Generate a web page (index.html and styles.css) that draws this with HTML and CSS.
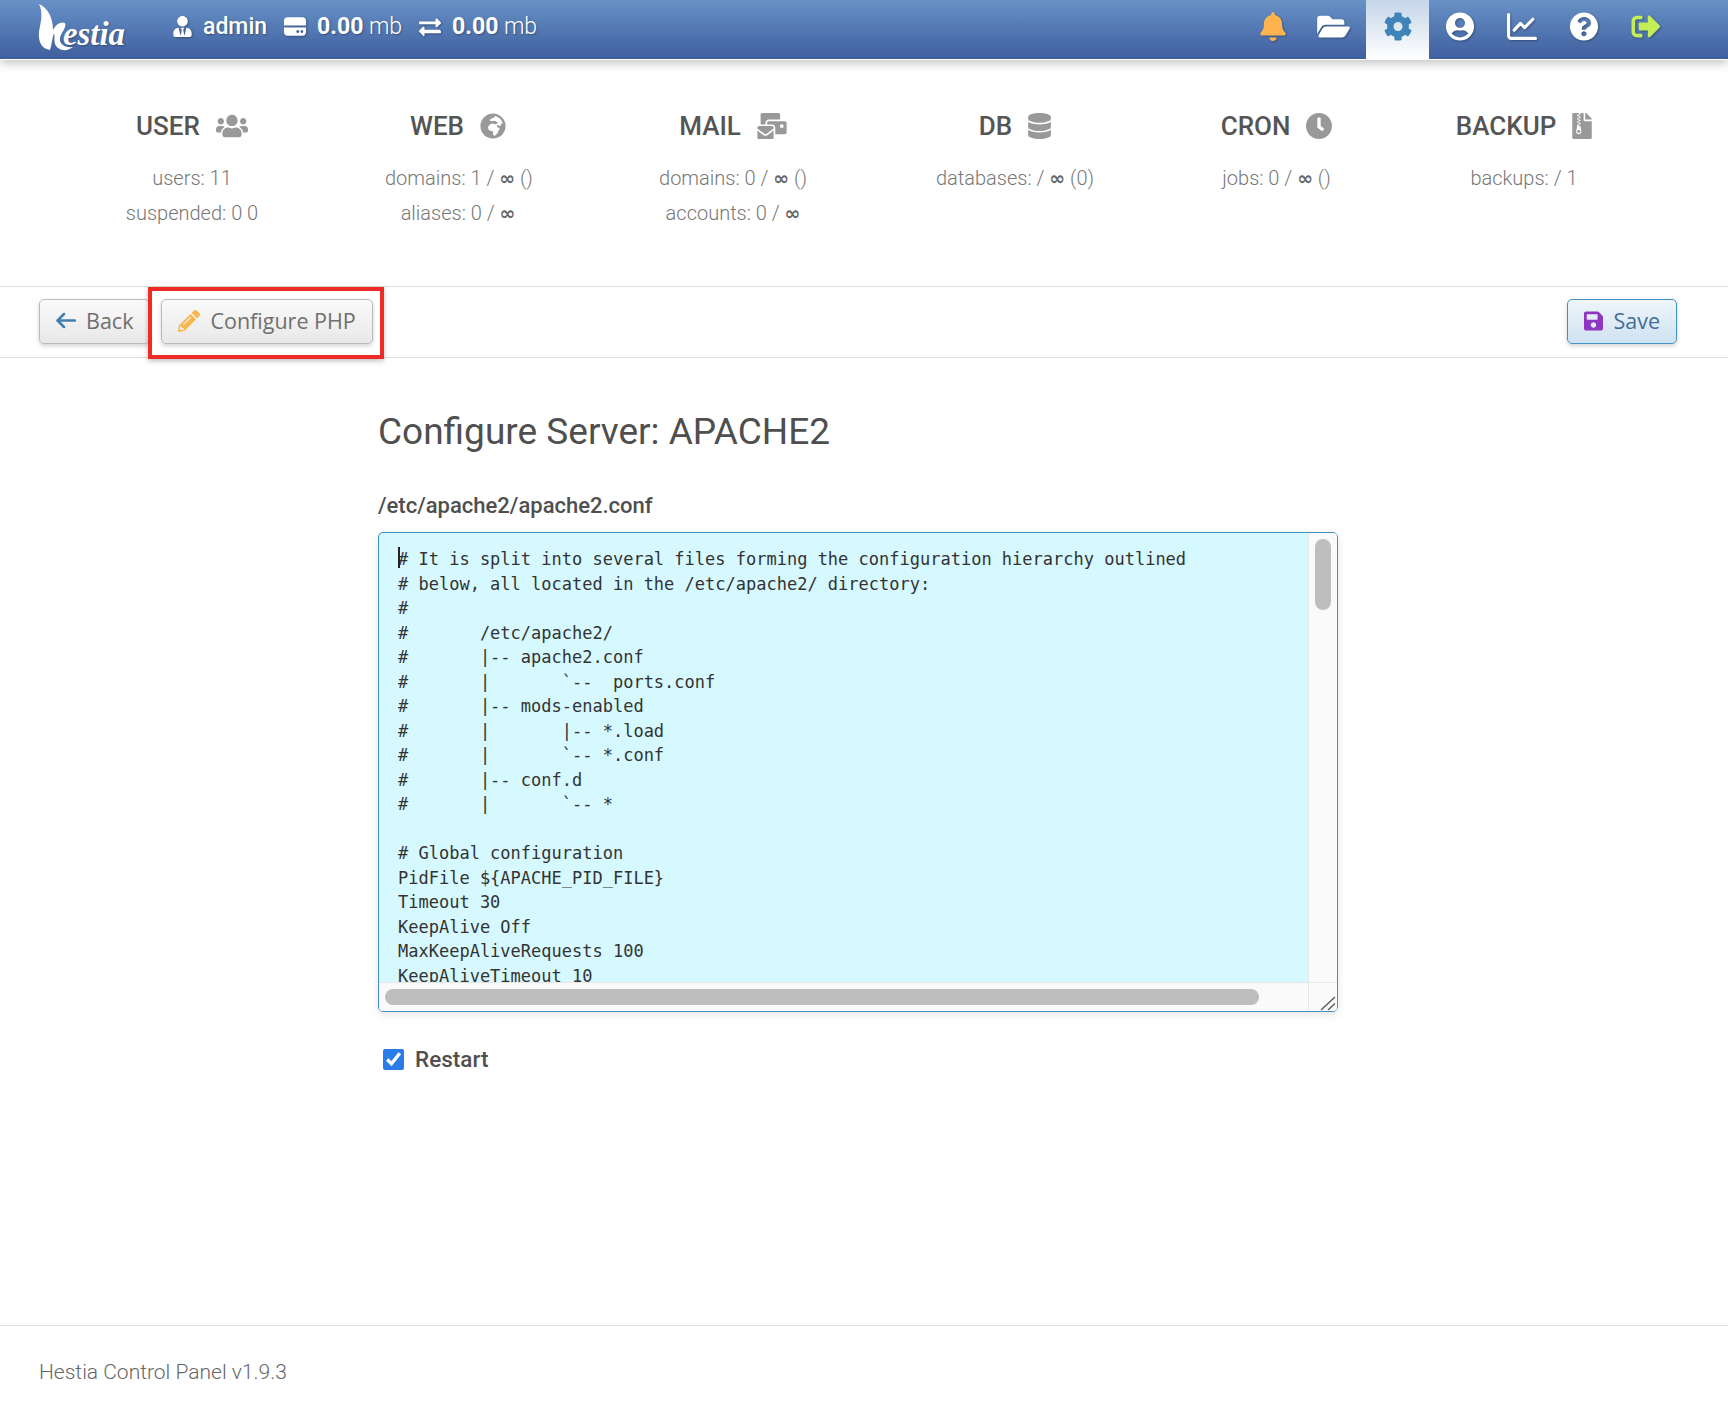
FILE: index.html
```html
<!DOCTYPE html>
<html lang="en">
<head>
<meta charset="utf-8">
<title>Hestia Control Panel</title>
<link rel="stylesheet" href="styles.css">
</head>
<body>
<header class="topbar">
  <div class="top-left">
    <a class="logo" href="#">
      <svg class="logo-svg" viewBox="0 0 90 50" aria-label="Hestia">
        <path fill="#fff" d="M1 2C10 6 15 16 15 28C18 22 23 19 27 21C29 25 23 31 22 36C21 42 27 46 35 45C29 50 20 49 17 42C16 38 17 33 16 31C14 36 14 42 12 48C4 47 0 40 1 30C2 22 6 12 1 2Z"/>
        <text class="logo-text" x="25" y="43" textLength="62" lengthAdjust="spacingAndGlyphs">estia</text>
      </svg>
    </a>
    <svg class="ti ti-user" viewBox="0 0 448 512"><path d="M224 256c70.7 0 128-57.3 128-128S294.7 0 224 0 96 57.3 96 128s57.3 128 128 128zm95.8 32.6L272 480l-32-136 32-56h-96l32 56-32 136-47.8-191.4C56.9 292 0 350.3 0 422.4V464c0 26.5 21.5 48 48 48h352c26.5 0 48-21.5 48-48v-41.6c0-72.1-56.9-130.4-128.2-133.8z"/></svg>
    <b class="top-name">admin</b>
    <svg class="ti ti-disk" viewBox="0 0 24 20"><path d="M4 0h16a4 4 0 0 1 4 4v5H0V4a4 4 0 0 1 4-4zM0 11h24v5a4 4 0 0 1-4 4H4a4 4 0 0 1-4-4zm16.500 4.500a1.500 1.500 0 1 0 0 .01zm4.500 0a1.500 1.500 0 1 0 0 .01z" fill-rule="evenodd"/></svg>
    <span class="top-val"><b>0.00</b> mb</span>
    <svg class="ti ti-swap" viewBox="0 0 512 512"><path d="M0 168v-16c0-13.255 10.745-24 24-24h360V80c0-21.367 25.899-32.042 40.971-16.971l80 80c9.372 9.373 9.372 24.569 0 33.941l-80 80C409.956 272.982 384 262.456 384 240v-48H24c-13.255 0-24-10.745-24-24zm488 152H128v-48c0-21.314-25.862-32.08-40.971-16.971l-80 80c-9.372 9.373-9.372 24.569 0 33.941l80 80C102.057 483.99 128 473.46 128 448v-48h360c13.255 0 24-10.745 24-24v-16c0-13.255-10.745-24-24-24z"/></svg>
    <span class="top-val"><b>0.00</b> mb</span>
  </div>
  <nav class="top-right">
    <a class="nav-item" href="#"><svg class="ni bell" viewBox="0 0 448 512"><path d="M224 512c35.32 0 63.97-28.65 63.97-64H160.03c0 35.35 28.65 64 63.97 64zm215.39-149.71c-19.32-20.76-55.47-51.99-55.47-154.29 0-77.7-54.48-139.9-127.94-155.16V32c0-17.67-14.32-32-31.98-32s-31.98 14.33-31.98 32v20.84C118.56 68.1 64.08 130.3 64.08 208c0 102.3-36.15 133.53-55.47 154.29-6 6.45-8.66 14.16-8.61 21.71.11 16.4 12.98 32 32.1 32h383.8c19.12 0 32-15.6 32.1-32 .05-7.55-2.61-15.27-8.61-21.71z"/></svg></a>
    <a class="nav-item" href="#"><svg class="ni folder" viewBox="0 0 576 512"><path d="M572.694 292.093L500.27 416.248A63.997 63.997 0 0 1 444.989 448H45.025c-18.523 0-30.064-20.093-20.731-36.093l72.424-124.155A64 64 0 0 1 152 256h399.964c18.523 0 30.064 20.093 20.73 36.093zM152 224h328v-48c0-26.51-21.49-48-48-48H272l-64-64H48C21.49 64 0 85.49 0 112v278.046l69.077-118.418C86.214 242.25 117.989 224 152 224z"/></svg></a>
    <a class="nav-item active" href="#"><svg class="ni gear" viewBox="0 0 512 512"><path d="M487.4 315.7l-42.6-24.6c4.3-23.2 4.3-47 0-70.2l42.6-24.6c4.9-2.8 7.1-8.6 5.5-14-11.1-35.6-30-67.8-54.7-94.6-3.8-4.1-10-5.1-14.8-2.3L380.8 110c-17.9-15.4-38.5-27.3-60.8-35.1V25.8c0-5.6-3.9-10.5-9.4-11.7-36.7-8.2-74.3-7.8-109.2 0-5.5 1.2-9.4 6.1-9.4 11.7V75c-22.2 7.9-42.8 19.8-60.8 35.1L88.7 85.5c-4.9-2.8-11-1.9-14.8 2.3-24.7 26.7-43.6 58.9-54.7 94.6-1.7 5.4.6 11.2 5.5 14L67.3 221c-4.3 23.2-4.3 47 0 70.2l-42.6 24.6c-4.9 2.8-7.1 8.6-5.5 14 11.1 35.6 30 67.8 54.7 94.6 3.8 4.1 10 5.1 14.8 2.3l42.6-24.6c17.9 15.4 38.5 27.3 60.8 35.1v49.2c0 5.6 3.9 10.5 9.4 11.7 36.7 8.2 74.3 7.8 109.2 0 5.5-1.2 9.4-6.1 9.4-11.7v-49.2c22.2-7.9 42.8-19.8 60.8-35.1l42.6 24.6c4.9 2.8 11 1.9 14.8-2.3 24.7-26.7 43.6-58.9 54.7-94.6 1.5-5.5-.7-11.3-5.6-14.1zM256 336c-44.1 0-80-35.9-80-80s35.9-80 80-80 80 35.9 80 80-35.9 80-80 80z"/></svg></a>
    <a class="nav-item" href="#"><svg class="ni circle" viewBox="0 0 496 512"><path d="M248 8C111 8 0 119 0 256s111 248 248 248 248-111 248-248S385 8 248 8zm0 96c48.6 0 88 39.4 88 88s-39.4 88-88 88-88-39.4-88-88 39.4-88 88-88zm0 344c-58.7 0-111.3-26.6-146.5-68.2 18.8-35.4 55.6-59.8 98.5-59.8 2.4 0 4.8.4 7.1 1.1 13 4.2 26.6 6.9 40.9 6.9 14.3 0 28-2.7 40.9-6.9 2.3-.7 4.7-1.1 7.1-1.1 42.9 0 79.7 24.4 98.5 59.8C359.3 421.4 306.7 448 248 448z"/></svg></a>
    <a class="nav-item" href="#"><svg class="ni chart" viewBox="0 0 29 26"><path class="chart-line" d="M1.500 1.500V22a2.500 2.500 0 0 0 2.500 2.500H27.500M7 16.500l6-6.500 4 4L25 6"/></svg></a>
    <a class="nav-item" href="#"><svg class="ni circle" viewBox="0 0 512 512"><path d="M504 256c0 136.997-111.043 248-248 248S8 392.997 8 256C8 119.083 119.043 8 256 8s248 111.083 248 248zM262.655 90c-54.497 0-89.255 22.957-116.549 63.758-3.536 5.286-2.353 12.415 2.715 16.258l34.699 26.31c5.205 3.947 12.621 3.008 16.665-2.122 17.864-22.658 30.113-35.797 57.303-35.797 20.429 0 45.698 13.148 45.698 32.958 0 14.976-12.363 22.667-32.534 33.976C247.128 238.528 216 254.941 216 296v4c0 6.627 5.373 12 12 12h56c6.627 0 12-5.373 12-12v-1.333c0-28.462 83.186-29.647 83.186-106.667 0-58.002-60.165-102-116.531-102zM256 338c-25.365 0-46 20.635-46 46 0 25.364 20.635 46 46 46s46-20.636 46-46c0-25.365-20.635-46-46-46z"/></svg></a>
    <a class="nav-item" href="#"><svg class="ni logout" viewBox="0 0 512 512"><path d="M497 273L329 441c-15 15-41 4.500-41-17v-96H152c-13.300 0-24-10.700-24-24v-96c0-13.300 10.700-24 24-24h136V88c0-21.400 25.900-32 41-17l168 168c9.300 9.400 9.300 24.600 0 34zM192 436v-40c0-6.600-5.400-12-12-12H96c-17.700 0-32-14.300-32-32V160c0-17.700 14.300-32 32-32h84c6.600 0 12-5.400 12-12V76c0-6.600-5.400-12-12-12H96c-53 0-96 43-96 96v192c0 53 43 96 96 96h84c6.600 0 12-5.400 12-12z"/></svg></a>
  </nav>
</header>

<section class="stats">
  <div class="stat s-user">
    <h3><span>USER</span><svg class="si si-users" viewBox="0 0 640 512"><path d="M96 224c35.300 0 64-28.700 64-64s-28.700-64-64-64-64 28.700-64 64 28.700 64 64 64zm448 0c35.300 0 64-28.700 64-64s-28.700-64-64-64-64 28.700-64 64 28.700 64 64 64zm32 32h-64c-17.600 0-33.500 7.100-45.100 18.600 40.300 22.100 68.900 62 75.100 109.400h66c17.700 0 32-14.300 32-32v-32c0-35.300-28.700-64-64-64zm-256 0c61.900 0 112-50.100 112-112S381.900 32 320 32 208 82.100 208 144s50.100 112 112 112zm76.800 32h-8.300c-20.800 10-43.900 16-68.500 16s-47.600-6-68.500-16h-8.300C179.600 288 128 339.600 128 403.200V432c0 26.500 21.500 48 48 48h288c26.500 0 48-21.500 48-48v-28.800c0-63.600-51.600-115.200-115.200-115.200zm-223.700-13.400C161.500 263.100 145.600 256 128 256H64c-35.300 0-64 28.700-64 64v32c0 17.700 14.300 32 32 32h65.900c6.300-47.400 34.900-87.300 75.200-109.400z"/></svg></h3>
    <p>users: 11</p>
    <p>suspended: 0 0</p>
  </div>
  <div class="stat s-web">
    <h3><span>WEB</span><svg class="si" viewBox="0 0 496 512"><path d="M248 8C111.030 8 0 119.030 0 256s111.030 248 248 248 248-111.030 248-248S384.970 8 248 8zm160 215.500v6.930c0 5.870-3.320 11.240-8.570 13.860l-15.390 7.700a15.485 15.485 0 0 1-15.530-.97l-18.210-12.140a15.520 15.520 0 0 0-13.500-1.810l-2.650.88c-9.700 3.230-13.660 14.790-7.990 23.300l13.240 19.860c2.870 4.310 7.710 6.900 12.890 6.900h8.210c8.560 0 15.500 6.940 15.500 15.500v11.340c0 3.350-1.090 6.620-3.100 9.300l-18.740 24.980c-1.420 1.900-2.390 4.100-2.830 6.430l-4.300 22.830c-.62 3.290-2.290 6.290-4.760 8.560a159.608 159.608 0 0 0-25 29.160l-13.030 19.550a27.756 27.756 0 0 1-23.090 12.360c-10.510 0-20.120-5.940-24.820-15.340a78.902 78.902 0 0 1-8.330-35.290V367.500c0-8.560-6.940-15.500-15.500-15.500h-25.880c-14.490 0-28.380-5.760-38.630-16a54.659 54.659 0 0 1-16-38.630v-14.060c0-17.190 8.100-33.380 21.850-43.700l27.580-20.690a54.663 54.663 0 0 1 32.780-10.930h.89c8.480 0 16.850 1.970 24.430 5.770l14.720 7.360c3.680 1.840 7.930 2.140 11.830.84l47.310-15.770c6.330-2.110 10.600-8.030 10.600-14.700 0-8.560-6.940-15.500-15.500-15.500h-10.090c-4.110 0-8.050-1.630-10.960-4.540l-6.920-6.920a15.487 15.487 0 0 0-10.960-4.540H199.500c-8.560 0-15.500-6.940-15.500-15.500v-4.400c0-7.110 4.840-13.310 11.740-15.040l14.450-3.610c3.740-.94 7-3.230 9.140-6.440l8.080-12.110c2.870-4.310 7.710-6.900 12.890-6.900h24.210c8.560 0 15.500-6.940 15.500-15.500v-21.700C359.230 71.630 422.860 131.020 441.930 208H423.500c-8.560 0-15.500 6.940-15.500 15.500z"/></svg></h3>
    <p>domains: 1 / <span class="inf">∞</span> ()</p>
    <p>aliases: 0 / <span class="inf">∞</span></p>
  </div>
  <div class="stat s-mail">
    <h3><span>MAIL</span><svg class="si si-mail" viewBox="0 0 576 512"><path d="M160 448c-25.600 0-51.200-22.400-64-32-64-44.800-83.200-60.800-96-70.400V480c0 17.670 14.330 32 32 32h256c17.670 0 32-14.330 32-32V345.600c-12.800 9.600-32 25.600-96 70.400-12.800 9.600-38.400 32-64 32zm128-192H32c-17.670 0-32 14.330-32 32v16c25.600 19.200 22.400 19.200 115.200 86.400 9.600 6.400 28.800 25.600 44.800 25.600s35.200-19.200 44.800-22.400c92.800-67.200 89.600-67.200 115.200-86.400V288c0-17.670-14.330-32-32-32zm256-96H224c-17.670 0-32 14.330-32 32v32h96c33.210 0 60.590 25.420 63.710 57.820l.29-.22V416h192c17.670 0 32-14.330 32-32V192c0-17.670-14.330-32-32-32zm-32 128h-64v-64h64v64zm-352-96c0-35.290 28.710-64 64-64h224V32c0-17.670-14.330-32-32-32H96C78.330 0 64 14.330 64 32v192h96v-32z"/></svg></h3>
    <p>domains: 0 / <span class="inf">∞</span> ()</p>
    <p>accounts: 0 / <span class="inf">∞</span></p>
  </div>
  <div class="stat s-db">
    <h3><span>DB</span><svg class="si si-db" viewBox="0 0 448 512"><path d="M448 73.143v45.714C448 159.143 347.667 192 224 192S0 159.143 0 118.857V73.143C0 32.857 100.333 0 224 0s224 32.857 224 73.143zM448 176v102.857C448 319.143 347.667 352 224 352S0 319.143 0 278.857V176c48.125 33.143 136.208 48.572 224 48.572S399.874 209.143 448 176zm0 160v102.857C448 479.143 347.667 512 224 512S0 479.143 0 438.857V336c48.125 33.143 136.208 48.572 224 48.572S399.874 369.143 448 336z"/></svg></h3>
    <p>databases: / <span class="inf">∞</span> (0)</p>
  </div>
  <div class="stat s-cron">
    <h3><span>CRON</span><svg class="si" viewBox="8 8 496 496"><path d="M256,8C119,8,8,119,8,256S119,504,256,504,504,393,504,256,393,8,256,8Zm92.490,313h0l-20,25a16,16,0,0,1-22.490,2.500h0l-67-49.720a40,40,0,0,1-15-31.230V112a16,16,0,0,1,16-16h32a16,16,0,0,1,16,16V256l58,42.500A16,16,0,0,1,348.490,321Z"/></svg></h3>
    <p>jobs: 0 / <span class="inf">∞</span> ()</p>
  </div>
  <div class="stat s-backup">
    <h3><span>BACKUP</span><svg class="si si-zip" viewBox="0 0 384 512"><path d="M377 105L279.100 7c-4.500-4.500-10.600-7-17-7H256v128h128v-6.100c0-6.300-2.500-12.400-7-16.900zM128.400 336c-17.900 0-32.400 12.100-32.400 27 0 15 14.600 27 32.500 27s32.400-12.100 32.400-27-14.600-27-32.500-27zM224 136V0h-63.600v32h-32V0H24C10.700 0 0 10.700 0 24v464c0 13.300 10.700 24 24 24h336c13.300 0 24-10.700 24-24V160H248c-13.200 0-24-10.800-24-24zM95.900 32h32v32h-32zm32.300 384c-33.200 0-58-30.400-51.400-62.900L96.400 256v-32h32v-32h-32v-32h32v-32h-32V96h32V64h32v32h-32v32h32v32h-32v32h32v32h-32v32h22.100c5.700 0 10.700 4.100 11.800 9.700l17.300 87.700c6.400 32.400-18.400 62.600-51.400 62.600z"/></svg></h3>
    <p>backups: / 1</p>
  </div>
</section>

<div class="toolbar">
  <div class="tool-left">
    <a class="btn" href="#"><svg class="bi bi-back" viewBox="0 0 20 16"><path d="M8 1.500L1.500 8 8 14.500M2 8h17"/></svg>Back</a>
    <span class="callout"><a class="btn" href="#"><svg class="bi bi-pen" viewBox="0 0 512 512"><path d="M497.900 142.100l-46.100 46.100c-4.700 4.700-12.300 4.700-17 0l-111-111c-4.700-4.700-4.700-12.300 0-17l46.100-46.100c18.700-18.700 49.100-18.700 67.900 0l60.100 60.100c18.800 18.700 18.800 49.100 0 67.900zM284.200 99.800L21.600 362.400.4 483.900c-2.900 16.400 11.400 30.600 27.800 27.800l121.500-21.300 262.600-262.600c4.700-4.700 4.700-12.300 0-17l-111-111c-4.800-4.700-12.400-4.700-17.100 0zM124.100 339.900c-5.500-5.500-5.500-14.300 0-19.800l154-154c5.500-5.500 14.300-5.500 19.800 0s5.500 14.300 0 19.800l-154 154c-5.500 5.500-14.300 5.500-19.800 0zM88 424h48v36.300l-64.500 11.300-31.100-31.100L51.700 376H88v48z"/></svg>Configure PHP</a></span>
  </div>
  <a class="btn btn-save" href="#"><svg class="bi bi-save" viewBox="0 0 448 512"><path d="M433.941 129.941l-83.882-83.882A48 48 0 0 0 316.118 32H48C21.490 32 0 53.490 0 80v352c0 26.510 21.490 48 48 48h352c26.510 0 48-21.490 48-48V163.882a48 48 0 0 0-14.059-33.941zM224 416c-35.346 0-64-28.654-64-64 0-35.346 28.654-64 64-64s64 28.654 64 64c0 35.346-28.654 64-64 64zm96-304.520V212c0 6.627-5.373 12-12 12H76c-6.627 0-12-5.373-12-12V108c0-6.627 5.373-12 12-12h228.520c3.183 0 6.235 1.264 8.485 3.515l3.480 3.480A11.996 11.996 0 0 1 320 111.480z"/></svg>Save</a>
</div>

<main class="main">
  <form class="form">
    <h1>Configure Server: APACHE2</h1>
    <label class="conf-label" for="conf">/etc/apache2/apache2.conf</label>
    <div class="editor">
      <textarea id="conf" class="conf" wrap="off" spellcheck="false"># It is split into several files forming the configuration hierarchy outlined
# below, all located in the /etc/apache2/ directory:
#
#       /etc/apache2/
#       |-- apache2.conf
#       |       `--  ports.conf
#       |-- mods-enabled
#       |       |-- *.load
#       |       `-- *.conf
#       |-- conf.d
#       |       `-- *

# Global configuration
PidFile ${APACHE_PID_FILE}
Timeout 30
KeepAlive Off
MaxKeepAliveRequests 100
KeepAliveTimeout 10
HostnameLookups Off
User ${APACHE_RUN_USER}
Group ${APACHE_RUN_GROUP}
LogLevel warn

# ErrorLog: The location of the error log file.
ErrorLog ${APACHE_LOG_DIR}/error.log

# Include module configuration:
IncludeOptional mods-enabled/*.load
IncludeOptional mods-enabled/*.conf

# Include list of ports to listen on
Include ports.conf</textarea>
      <span class="caret"></span>
      <div class="sb sb-v"><span class="thumb thumb-v"></span></div>
      <div class="sb sb-h"><span class="thumb thumb-h"></span></div>
      <div class="sb sb-corner"><svg class="grip" viewBox="0 0 16 15"><path d="M1 14L15 1M8 14L15 7.500"/></svg></div>
    </div>
    <label class="restart"><input class="restart-box" type="checkbox" checked>Restart</label>
  </form>
</main>

<footer class="footer">Hestia Control Panel v1.9.3</footer>
</body>
</html>
```

FILE: styles.css
```css
* { box-sizing: border-box; }
html, body { height: 100%; }
body {
  margin: 0;
  min-height: 1420px;
  display: flex;
  flex-direction: column;
  background: #fff;
  color: #555;
  font-family: Roboto, "Noto Sans", sans-serif;
}
a { text-decoration: none; color: inherit; }

/* top bar */
.topbar {
  height: 60px;
  flex: none;
  display: flex;
  justify-content: space-between;
  background: linear-gradient(#6791c6, #3f5f9f);
  border-bottom: 1px solid #fff;
  box-shadow: 0 3px 10px rgba(0,0,0,.25);
  position: relative;
  z-index: 2;
}
.top-left {
  display: flex;
  align-items: center;
  padding-left: 38px;
  color: #fff;
  font-size: 23px;
  height: 53px;
  text-shadow: 1px 1px 2px rgba(0,0,0,.3);
}
.logo { display: block; width: 90px; height: 50px; margin-right: 45px; }
.logo-svg { display: block; width: 90px; height: 50px; }
.logo-text {
  font-family: "Liberation Serif", serif;
  font-style: italic;
  font-weight: 700;
  font-size: 33px;
  fill: #fff;
}
.ti { fill: #fff; flex: none; filter: drop-shadow(1px 1px 1px rgba(0,0,0,.3)); }
.ti-user { width: 19px; height: 21px; margin-right: 11px; }
.ti-disk { width: 22px; height: 19px; margin-right: 11px; }
.ti-swap { width: 22px; height: 22px; margin-right: 11px; }
.top-name { font-weight: 500; margin-right: 17px; }
.top-val { font-weight: 300; margin-right: 17px; white-space: nowrap; }
.top-val b { font-weight: 700; }

.top-right { display: flex; padding-right: 51px; }
.nav-item {
  width: 62px;
  height: 59px;
  display: flex;
  align-items: flex-start;
  justify-content: center;
  padding-top: 12px;
}
.ni { fill: #fff; height: 29px; width: 30px; filter: drop-shadow(1px 1px 1px rgba(0,0,0,.3)); }
.ni.bell { fill: #fdb44e; }
.ni.folder { width: 33px; margin-right: 3px; }
.ni.logout { fill: #c6ed58; }
.chart-line { fill: none; stroke: #fff; stroke-width: 3; stroke-linecap: round; stroke-linejoin: round; }
.nav-item.active { width: 63px; background: linear-gradient(#c5d5e8, #fff); }
.ni.gear { fill: #3e84b8; filter: none; }

/* stats */
.stats {
  flex: none;
  height: 226px;
  padding: 51px 0 0 125px;
  display: grid;
  grid-template-columns: 134px 146px 152px 160px 111px 132px;
  column-gap: 126px;
  align-items: start;
  text-align: center;
}
.stat h3 {
  margin: 0 0 20px;
  height: 30px;
  display: flex;
  align-items: center;
  justify-content: center;
  gap: 16px;
  font-size: 26px;
  font-weight: 500;
  color: #555;
}
.si { height: 26px; width: 26px; fill: #999; flex: none; }
.si-users { width: 32px; }
.si-mail { width: 30px; }
.si-db { width: 23px; }
.si-zip { width: 20px; }
.stat p {
  margin: 0;
  font-size: 20px;
  font-weight: 300;
  line-height: 35px;
  color: #777;
  white-space: nowrap;
}
.inf { font-family: "DejaVu Sans", sans-serif; font-weight: 700; font-size: 19px; line-height: 0; color: #666; }

/* toolbar */
.toolbar {
  flex: none;
  height: 72px;
  border-top: 1px solid #ddd;
  border-bottom: 1px solid #ddd;
  padding: 12px 51px 0 39px;
  display: flex;
  justify-content: space-between;
  align-items: flex-start;
}
.tool-left { display: flex; gap: 11px; }
.btn {
  height: 45px;
  display: inline-flex;
  align-items: center;
  gap: 10px;
  padding: 0 16px 2px;
  border: 1px solid #bbb;
  border-radius: 5px;
  background: linear-gradient(#fafafa, #e8e8e8);
  box-shadow: 0 2px 4px rgba(0,0,0,.18);
  font-family: "Open Sans", sans-serif;
  font-size: 21.500px;
  color: #6f6f6f;
}
.callout { position: relative; display: block; }
.callout::after {
  content: "";
  position: absolute;
  top: -12px;
  left: -13px;
  right: -11px;
  bottom: -15px;
  border: 4px solid #ee2b24;
  box-shadow: 0 2px 5px rgba(0,0,0,.25);
  pointer-events: none;
}
.bi { flex: none; }
.bi-back { width: 20px; height: 17px; fill: none; stroke: #3f7fb0; stroke-width: 2.500; stroke-linecap: round; stroke-linejoin: round; }
.bi-pen { width: 22px; height: 22px; fill: #f6b84f; }
.bi-save { width: 19px; height: 22px; fill: #8e36bf; }
.btn-save {
  border-color: #3f93c4;
  background: linear-gradient(#eef5fb, #cfe2f1);
  color: #436e97;
}

/* form */
.main { flex: 1; padding: 0 51px 0 39px; }
.form { width: 960px; margin: 0 auto; }
.form h1 {
  margin: 50px 0 0;
  font-size: 37px;
  line-height: 48px;
  font-weight: 400;
  color: #4f4f4f;
}
.conf-label {
  display: block;
  margin-top: 35px;
  font-size: 22px;
  line-height: 30px;
  font-weight: 500;
  color: #4f4f4f;
}
.editor {
  position: relative;
  margin-top: 11px;
  height: 480px;
  border: 1px solid #3f93c4;
  border-radius: 5px;
  overflow: hidden;
  background: #d6f8ff;
  box-shadow: 0 3px 8px rgba(0,0,0,.1);
}
.conf {
  display: block;
  width: 100%;
  height: 100%;
  margin: 0;
  padding: 14px 19px;
  border: 0;
  background: transparent;
  color: #333;
  font-family: "DejaVu Sans Mono", monospace;
  font-size: 17px;
  line-height: 24.500px;
  white-space: pre;
  overflow: hidden;
  resize: none;
  outline: none;
}
.caret {
  position: absolute;
  left: 19px;
  top: 14px;
  width: 2px;
  height: 21px;
  background: #222;
}
.sb { position: absolute; background: #fafafa; border: 0 solid #e6e6e6; }
.sb-v { top: 0; right: 0; bottom: 0; width: 29px; padding: 6px 6px 0; border-left-width: 1px; }
.sb-h { left: 0; right: 29px; bottom: 0; height: 29px; padding: 6px 6px 0; border-top-width: 1px; }
.sb-corner { right: 0; bottom: 0; width: 29px; height: 29px; border-top-width: 1px; border-left-width: 1px; }
.thumb { display: block; background: #bebebe; border-radius: 8px; }
.thumb-v { width: 16px; height: 71px; }
.thumb-h { width: 874px; height: 16px; }
.grip { position: absolute; right: 1px; bottom: 0; width: 16px; height: 15px; fill: none; stroke: #555; stroke-width: 1.300; }
.restart {
  display: flex;
  align-items: center;
  gap: 11px;
  margin: 36px 0 0 5px;
  font-size: 22.500px;
  font-weight: 500;
  line-height: 22px;
  color: #4f4f4f;
}
.restart-box { width: 21px; height: 21px; margin: 0; accent-color: #2a7de6; }

/* footer */
.footer {
  flex: none;
  height: 95px;
  border-top: 1px solid #ddd;
  padding: 32px 0 0 39px;
  font-size: 21px;
  line-height: 28px;
  font-weight: 300;
  color: #666;
}
```
